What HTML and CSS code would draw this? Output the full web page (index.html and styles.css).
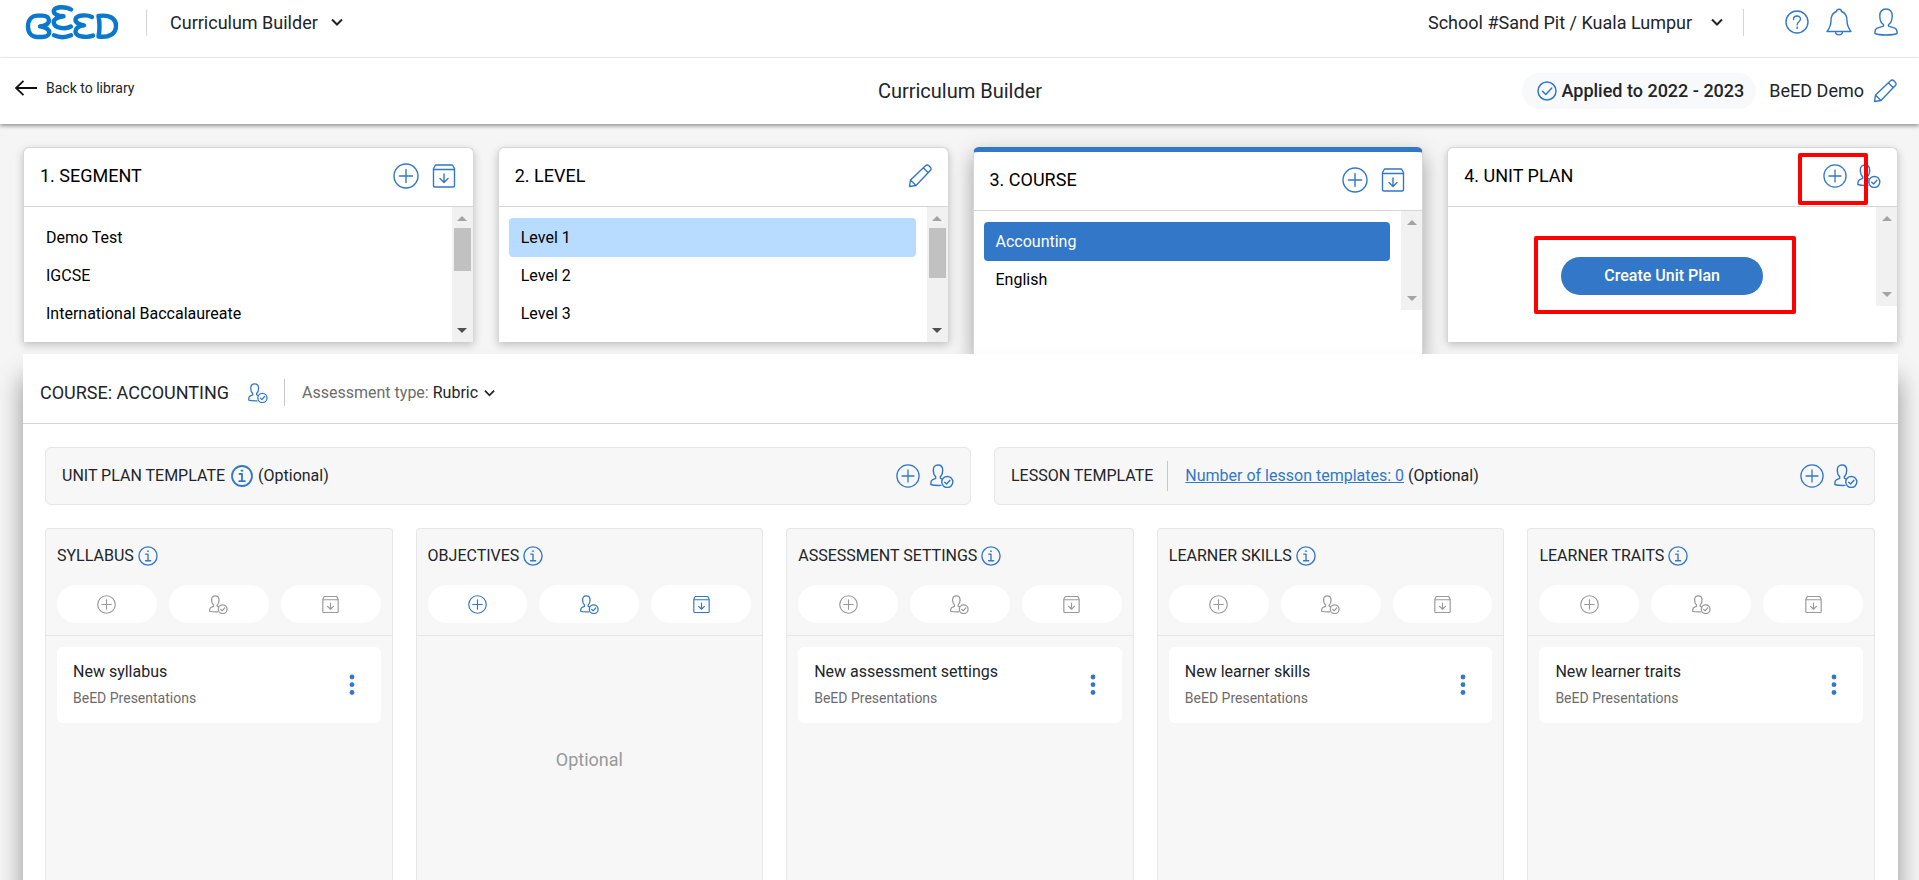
FILE: index.html
```html
<!DOCTYPE html>
<html lang="en">
<head>
<meta charset="utf-8">
<title>Curriculum Builder</title>
<link rel="stylesheet" href="styles.css">
</head>
<body>
<svg class="sprite" aria-hidden="true">
  <symbol id="plus" viewBox="0 0 26 26"><circle cx="13" cy="13" r="12"/><path d="M13 6.500v13M6.500 13h13"/></symbol>
  <symbol id="archive" viewBox="0 0 26 26"><path d="M2.500 5.500L4.500 2h17l2 3.500V22.500a1.500 1.500 0 0 1-1.500 1.500H4a1.500 1.500 0 0 1-1.500-1.500zM2.500 6.500h21M13 11v8M9 15.500l4 4 4-4"/></symbol>
  <symbol id="pencil" viewBox="0 0 24 24"><path d="M1.500 22.500l1-6.500L17.500 1.800c1-1 2.400-1 3.400 0l1.400 1.400c1 1 1 2.400 0 3.400L8 21.500zM15.500 4l4.600 4.600M2.500 16l5.500 5.500"/></symbol>
  <symbol id="approve" viewBox="0 0 24 24"><path d="M8 1C4.800 1 3.300 3 3.300 6.200c0 3 .7 5 2.400 6.500v1.600L2.300 15.800C1.200 16.400.9 17.500.9 19v1.500c2.500 1 6.500 1 10 .9M8 1c3.200 0 4.700 2 4.700 5.200 0 3-.7 5-2.400 6.500v1.400l1.700.9"/><circle cx="17.300" cy="18" r="5.500"/><path d="M14.700 18.200l1.900 1.800 3.300-3.800"/></symbol>
  <symbol id="info" viewBox="0 0 22 22"><circle cx="11" cy="11" r="10"/><path d="M8.500 9H11v7M8.300 16.200h5.600M10.500 5.700h1"/></symbol>
  <symbol id="check" viewBox="0 0 20 20"><circle cx="10" cy="10" r="9"/><path d="M5.500 10.200l3.300 3.300 6-6.500"/></symbol>
  <symbol id="help" viewBox="0 0 24 24"><circle cx="12" cy="12" r="11"/><path d="M8.500 9.500c0-4.600 7-4.500 7-.4 0 2.600-3.400 2.600-3.400 5.700M12.100 17v1.600"/></symbol>
  <symbol id="bell" viewBox="0 0 26 28"><path d="M10.500 3.500c0-3 5-3 5 0 4.500 1.500 5.500 4.500 5.500 9 0 5 1.200 7.500 4 11H1c2.800-3.500 4-6 4-11 0-4.500 1-7.500 5.500-9zM9.500 23.500c0 4.500 7 4.500 7 0"/></symbol>
  <symbol id="user" viewBox="0 0 24 28"><path d="M12 1C7.700 1 5.800 4 5.800 8c0 4 1.200 7 3.700 8.500v1.600l-6.300 2C1.500 20.800 1 22 1 24v1.500C6 27.500 18 27.500 23 25.500V24c0-2-.5-3.200-2.200-3.900l-6.300-2v-1.600C17 15 18.200 12 18.200 8c0-4-1.900-7-6.200-7z"/></symbol>
  <symbol id="chevron" viewBox="0 0 12 8"><path d="M1 1.500l5 5 5-5"/></symbol>
  <symbol id="dots" viewBox="0 0 6 22"><g fill="currentColor" stroke="none"><circle cx="3" cy="3" r="2.400"/><circle cx="3" cy="10.700" r="2.400"/><circle cx="3" cy="18.500" r="2.400"/></g></symbol>
</svg>

<header class="topbar">
  <a class="brand" href="#" aria-label="BeED home">
    <svg class="brand-mark" viewBox="25 4 94 38" aria-hidden="true">
      <path d="M37.500 16.600c-6 0-9.500 4.600-9.500 10.900s3.500 10.500 9.500 10.500h4.500c4.500 0 7.300-1.800 7.300-4.700 0-3.300-4.500-5-9.300-5.900 4.800-.7 9-2.800 9-6 0-3.200-3-4.800-6.500-4.800z"/>
      <path d="M71 10.500c-4.500-3-15.500-3.400-17 .8-1.200 3.700 4.500 5.700 9.500 6-5.500.6-10.300 2.800-9.700 6.500 1 5.800 12 6.600 17 3.700M54 36.300c5 2.200 12 2.200 17 0"/>
      <path d="M92 18c-4.500-2.300-15.500-2.500-16.500 2.200-.5 3.500 4.500 5.700 8.500 6.200-4.500.6-8.500 2.500-8.500 6 0 5.600 11.500 6.600 17.500 4.200"/>
      <path d="M98.500 17c1.300 6.500 1.300 14 0 20.500 11 1.500 17.500-3 17.500-10.500s-6.500-11.800-17.500-10z"/>
    </svg>
  </a>
  <span class="picker app-picker">
    <select aria-label="Application"><option>Curriculum Builder</option></select>
    <svg class="chevron"><use href="#chevron"/></svg>
  </span>
  <span class="picker school-picker">
    <select aria-label="School"><option>School #Sand Pit / Kuala Lumpur</option></select>
    <svg class="chevron"><use href="#chevron"/></svg>
  </span>
  <nav class="tools" aria-label="Account">
    <button aria-label="Help"><svg class="icon i24"><use href="#help"/></svg></button>
    <button aria-label="Notifications"><svg class="icon i28"><use href="#bell"/></svg></button>
    <button aria-label="Profile"><svg class="icon i28"><use href="#user"/></svg></button>
  </nav>
</header>

<div class="subbar">
  <a class="back" href="#"><svg class="back-arrow" viewBox="0 0 22 16"><path d="M22 8H1M8.500 .8L1 8l7.500 7.200"/></svg>Back to library</a>
  <h1>Curriculum Builder</h1>
  <div class="status">
    <span class="applied"><svg class="icon i20"><use href="#check"/></svg>Applied to 2022 - 2023</span>
    <span class="owner">BeED Demo</span>
    <button aria-label="Edit curriculum"><svg class="icon i24"><use href="#pencil"/></svg></button>
  </div>
</div>

<main>
  <div class="steps">
    <section class="step">
      <header><h2>1. SEGMENT</h2>
        <div class="actions"><button aria-label="Add segment"><svg class="icon i26"><use href="#plus"/></svg></button><button aria-label="Import segment"><svg class="icon i26"><use href="#archive"/></svg></button></div>
      </header>
      <div class="step-body">
        <div class="list"><button>Demo Test</button><button>IGCSE</button><button>International Baccalaureate</button></div>
        <div class="track scrollable"><i class="up"></i><i class="thumb"></i><i class="down"></i></div>
      </div>
    </section>
    <section class="step">
      <header><h2>2. LEVEL</h2>
        <div class="actions"><button aria-label="Edit levels"><svg class="icon i24"><use href="#pencil"/></svg></button></div>
      </header>
      <div class="step-body">
        <div class="list"><button class="chosen">Level 1</button><button>Level 2</button><button>Level 3</button></div>
        <div class="track scrollable"><i class="up"></i><i class="thumb long"></i><i class="down"></i></div>
      </div>
    </section>
    <section class="step current">
      <header><h2>3. COURSE</h2>
        <div class="actions"><button aria-label="Add course"><svg class="icon i26"><use href="#plus"/></svg></button><button aria-label="Import course"><svg class="icon i26"><use href="#archive"/></svg></button></div>
      </header>
      <div class="step-body">
        <div class="list"><button class="active">Accounting</button><button>English</button></div>
        <div class="track short"><i class="up"></i><i class="down"></i></div>
      </div>
    </section>
    <section class="step">
      <header><h2>4. UNIT PLAN</h2>
        <div class="actions tight"><span class="marked mark-add"><button aria-label="Add unit plan"><svg class="icon i24"><use href="#plus"/></svg></button></span><button aria-label="Approve unit plan"><svg class="icon i24"><use href="#approve"/></svg></button></div>
      </header>
      <div class="step-body">
        <div class="create"><span class="marked mark-create"><button class="primary">Create Unit Plan</button></span></div>
        <div class="track short"><i class="up"></i><i class="down"></i></div>
      </div>
    </section>
  </div>

  <section class="panel">
    <header class="panel-head">
      <h2>COURSE: ACCOUNTING</h2>
      <button aria-label="Approve course"><svg class="icon i20"><use href="#approve"/></svg></button>
      <div class="assessment">
        <label for="assessment">Assessment type:</label>
        <span class="picker small"><select id="assessment"><option>Rubric</option></select><svg class="chevron"><use href="#chevron"/></svg></span>
      </div>
    </header>

    <div class="templates">
      <div class="template">
        <h3>UNIT PLAN TEMPLATE</h3>
        <svg class="icon i22"><use href="#info"/></svg>
        <span class="note">(Optional)</span>
        <div class="actions tight"><button aria-label="Add unit plan template"><svg class="icon i24"><use href="#plus"/></svg></button><button aria-label="Approve unit plan template"><svg class="icon i24"><use href="#approve"/></svg></button></div>
      </div>
      <div class="template">
        <h3>LESSON TEMPLATE</h3>
        <p class="count"><a href="#">Number of lesson templates: 0</a> (Optional)</p>
        <div class="actions tight"><button aria-label="Add lesson template"><svg class="icon i24"><use href="#plus"/></svg></button><button aria-label="Approve lesson template"><svg class="icon i24"><use href="#approve"/></svg></button></div>
      </div>
    </div>

    <div class="columns">
      <section class="column">
        <header><h3>SYLLABUS <svg class="icon i20"><use href="#info"/></svg></h3>
          <div class="pills"><button disabled aria-label="Add"><svg class="icon i19"><use href="#plus"/></svg></button><button disabled aria-label="Approve"><svg class="icon i19"><use href="#approve"/></svg></button><button disabled aria-label="Import"><svg class="icon i19"><use href="#archive"/></svg></button></div>
        </header>
        <article class="entry"><div><h4>New syllabus</h4><p>BeED Presentations</p></div><button aria-label="More"><svg class="dots"><use href="#dots"/></svg></button></article>
      </section>
      <section class="column">
        <header><h3>OBJECTIVES <svg class="icon i20"><use href="#info"/></svg></h3>
          <div class="pills"><button aria-label="Add"><svg class="icon i19"><use href="#plus"/></svg></button><button aria-label="Approve"><svg class="icon i19"><use href="#approve"/></svg></button><button aria-label="Import"><svg class="icon i19"><use href="#archive"/></svg></button></div>
        </header>
        <p class="empty">Optional</p>
      </section>
      <section class="column">
        <header><h3>ASSESSMENT SETTINGS <svg class="icon i20"><use href="#info"/></svg></h3>
          <div class="pills"><button disabled aria-label="Add"><svg class="icon i19"><use href="#plus"/></svg></button><button disabled aria-label="Approve"><svg class="icon i19"><use href="#approve"/></svg></button><button disabled aria-label="Import"><svg class="icon i19"><use href="#archive"/></svg></button></div>
        </header>
        <article class="entry"><div><h4>New assessment settings</h4><p>BeED Presentations</p></div><button aria-label="More"><svg class="dots"><use href="#dots"/></svg></button></article>
      </section>
      <section class="column">
        <header><h3>LEARNER SKILLS <svg class="icon i20"><use href="#info"/></svg></h3>
          <div class="pills"><button disabled aria-label="Add"><svg class="icon i19"><use href="#plus"/></svg></button><button disabled aria-label="Approve"><svg class="icon i19"><use href="#approve"/></svg></button><button disabled aria-label="Import"><svg class="icon i19"><use href="#archive"/></svg></button></div>
        </header>
        <article class="entry"><div><h4>New learner skills</h4><p>BeED Presentations</p></div><button aria-label="More"><svg class="dots"><use href="#dots"/></svg></button></article>
      </section>
      <section class="column">
        <header><h3>LEARNER TRAITS <svg class="icon i20"><use href="#info"/></svg></h3>
          <div class="pills"><button disabled aria-label="Add"><svg class="icon i19"><use href="#plus"/></svg></button><button disabled aria-label="Approve"><svg class="icon i19"><use href="#approve"/></svg></button><button disabled aria-label="Import"><svg class="icon i19"><use href="#archive"/></svg></button></div>
        </header>
        <article class="entry"><div><h4>New learner traits</h4><p>BeED Presentations</p></div><button aria-label="More"><svg class="dots"><use href="#dots"/></svg></button></article>
      </section>
    </div>
  </section>
</main>
</body>
</html>
```

FILE: styles.css
```css
:root {
  --blue: #3277c8;
  --ink: #212529;
  --muted: #6c6c6c;
  --line: #d6d6d6;
  --soft-line: #e6e6e6;
}

* { box-sizing: border-box; }

body {
  margin: 0;
  display: flex;
  flex-direction: column;
  height: 100vh;
  overflow: hidden;
  background: #f5f5f5;
  color: var(--ink);
  font: 16px/24px Roboto, "Liberation Sans", sans-serif;
}

h1, h2, h3, h4, p { margin: 0; font-weight: 400; }

button {
  display: block;
  margin: 0;
  padding: 0;
  border: 0;
  background: none;
  color: var(--blue);
  font: inherit;
  cursor: pointer;
}

svg { display: block; }

.sprite { position: absolute; width: 0; height: 0; }

.icon {
  flex: none;
  fill: none;
  stroke: currentColor;
  stroke-width: 1.4;
  stroke-linecap: round;
  stroke-linejoin: round;
  color: var(--blue);
}
.i19 { width: 19px; height: 19px; stroke-width: 1.6; }
.i20 { width: 20px; height: 20px; stroke-width: 1.5; }
.i22 { width: 22px; height: 22px; stroke-width: 1.8; }
.i24 { width: 24px; height: 24px; }
.i26 { width: 26px; height: 26px; }
.i28 { width: 26px; height: 28px; }

/* Top bar */
.topbar {
  display: flex;
  flex: none;
  align-items: center;
  height: 58px;
  padding: 0 20px 13px 25px;
  border-bottom: 1px solid #f1f1f1;
  background: #fff;
}
.brand-mark {
  width: 94px;
  height: 38px;
  fill: none;
  stroke: #0a78cf;
  stroke-width: 4.4;
  stroke-linecap: round;
  stroke-linejoin: round;
}

.picker { position: relative; display: inline-flex; align-items: center; }
.picker select {
  appearance: none;
  margin: 0;
  padding: 0 30px 0 0;
  border: 0;
  background: none;
  color: var(--ink);
  font: 18px/27px Roboto, "Liberation Sans", sans-serif;
}
.picker .chevron {
  position: absolute;
  right: 0;
  width: 12px;
  height: 8px;
  fill: none;
  stroke: var(--ink);
  stroke-width: 2;
  pointer-events: none;
}
.picker.small select { padding-right: 16px; font-size: 16px; line-height: 24px; }
.picker.small .chevron { width: 11px; }

.app-picker { margin-left: 27px; padding-left: 23px; border-left: 1px solid var(--line); }
.app-picker select { padding-right: 25px; }
.school-picker { margin-left: auto; }
.tools {
  display: flex;
  align-items: center;
  gap: 17px;
  height: 27px;
  margin-left: 20px;
  padding-left: 41px;
  border-left: 1px solid var(--line);
}
.tools button:last-child { margin-left: 4px; }

/* Title bar */
.subbar {
  position: relative;
  display: grid;
  grid-template-columns: 1fr auto 1fr;
  flex: none;
  align-items: center;
  height: 66px;
  padding: 0 22px 0 15px;
  background: #fff;
  box-shadow: 0 2px 4px rgba(0, 0, 0, .4);
}
.subbar h1 { padding-left: 8px; font-size: 20px; }
.back {
  display: flex;
  align-items: center;
  gap: 9px;
  padding-bottom: 6px;
  color: var(--ink);
  font-size: 14px;
  text-decoration: none;
}
.back-arrow { width: 22px; height: 16px; fill: none; stroke: #111; stroke-width: 1.8; }
.status { display: flex; align-items: center; justify-content: flex-end; font-size: 18px; }
.applied {
  display: flex;
  align-items: center;
  gap: 4px;
  height: 36px;
  margin-right: 13px;
  padding: 0 12px 0 15px;
  border-radius: 18px;
  background: #f8f9fb;
  font-weight: 500;
}
.owner { margin-right: 9px; }

/* Step cards */
main { display: flex; flex: 1; flex-direction: column; padding: 23px 21px 0 23px; }
.steps {
  display: grid;
  grid-template-columns: repeat(4, 1fr);
  gap: 24px;
}
.step {
  display: flex;
  flex-direction: column;
  margin-bottom: 12px;
  border: 1px solid var(--line);
  border-bottom: 0;
  border-radius: 6px 6px 0 0;
  background: #fff;
  color: #000;
  box-shadow: 0 3px 8px rgba(0, 0, 0, .22);
}
.step.current {
  margin-bottom: 0;
  border-top: 5px solid var(--blue);
  box-shadow: 0 8px 20px rgba(0, 0, 0, .35);
}
.step > header {
  display: flex;
  align-items: center;
  justify-content: space-between;
  height: 59px;
  padding: 0 16px 2px;
  border-bottom: 1px solid var(--line);
}
.step h2 { font-size: 18px; }
.actions { display: flex; align-items: center; gap: 12px; }
.actions.tight { gap: 10px; }
.step-body { display: flex; flex: 1; }
.list { flex: 1; padding: 11px 11px 10px 10px; }
.list button {
  width: 100%;
  height: 39px;
  margin-bottom: -1px;
  padding: 0 12px;
  border-radius: 4px;
  color: #000;
  text-align: left;
}
.list .chosen { background: #b8dcff; }
.list .active { background: var(--blue); color: #fff; }

.track {
  display: flex;
  flex-direction: column;
  align-items: center;
  width: 21px;
  padding: 9px 0;
  background: #f1f1f1;
}
.track.short { height: 99px; }
.up, .down { border: solid transparent; border-width: 0 5px; }
.up { border-bottom: 5px solid #a3a3a3; }
.down { margin-top: auto; border-top: 5px solid #a3a3a3; }
.scrollable .down { border-top-color: #505050; }
.thumb { width: 17px; height: 43px; margin-top: 7px; background: #c1c1c1; }
.thumb.long { height: 50px; }

.create { display: flex; flex: 1; justify-content: center; align-items: flex-start; padding: 50px 0 0; }
.primary {
  width: 202px;
  height: 38px;
  border-radius: 19px;
  background: var(--blue);
  color: #fff;
  font-weight: 500;
}

/* Red call-outs drawn over the controls they point at */
.marked { position: relative; display: block; }
.marked::after {
  content: "";
  position: absolute;
  z-index: 2;
  border: 4px solid #f00;
  border-radius: 2px;
  pointer-events: none;
}
.mark-add::after { inset: -11px -21px -17px -25px; }
.mark-create::after { inset: -21px -33px -19px -27px; }

/* Course panel */
.panel {
  position: relative;
  display: flex;
  flex: 1;
  flex-direction: column;
  background: #fff;
  box-shadow: 0 24px 24px rgba(0, 0, 0, .4);
}
.panel-head {
  display: flex;
  align-items: center;
  height: 70px;
  padding: 8px 17px 0;
  border-bottom: 1px solid var(--line);
}
.panel-head h2 { margin-right: 19px; font-size: 18px; }
.assessment {
  display: flex;
  align-items: center;
  gap: 4px;
  height: 27px;
  margin-left: 16px;
  padding-left: 17px;
  border-left: 1px solid #c8c8c8;
}
.assessment label { color: var(--muted); }

.templates {
  display: grid;
  grid-template-columns: 926fr 881fr;
  gap: 23px;
  padding: 23px 23px 23px 22px;
}
.template {
  display: flex;
  align-items: center;
  height: 58px;
  padding: 0 16px;
  border: 1px solid var(--soft-line);
  border-radius: 6px;
  background: #f7f7f7;
}
.template h3 { margin-right: 6px; font-size: 16px; }
.note { margin-left: 5px; }
.template .actions { margin-left: auto; }
.count {
  margin-left: 8px;
  padding: 3px 0 3px 17px;
  border-left: 1px solid #c8c8c8;
}
.count a { color: var(--blue); }

.columns {
  display: grid;
  flex: 1;
  grid-template-columns: repeat(5, 1fr);
  gap: 23px;
  padding: 0 23px 0 22px;
}
.column {
  border: 1px solid var(--soft-line);
  border-bottom: 0;
  border-radius: 4px 4px 0 0;
  background: #f7f7f7;
}
.column > header { padding: 15px 11px 12px; border-bottom: 1px solid var(--soft-line); }
.column h3 { display: flex; align-items: center; gap: 4px; font-size: 16px; }
.pills { display: grid; grid-template-columns: repeat(3, 1fr); gap: 12px; margin-top: 17px; }
.pills button {
  display: flex;
  align-items: center;
  justify-content: center;
  height: 38px;
  border-radius: 19px;
  background: #fff;
}
.pills button:disabled .icon { color: #999; }

.entry {
  display: flex;
  align-items: center;
  justify-content: space-between;
  height: 76px;
  margin: 11px;
  padding: 0 26px 0 16px;
  border-radius: 6px;
  background: #fff;
}
.entry h4 { font-size: 16px; }
.entry p { margin-top: 2px; color: var(--muted); font-size: 14px; }
.dots { width: 6px; height: 22px; }
.empty { padding-top: 112px; color: #999; font-size: 18px; text-align: center; }
```
